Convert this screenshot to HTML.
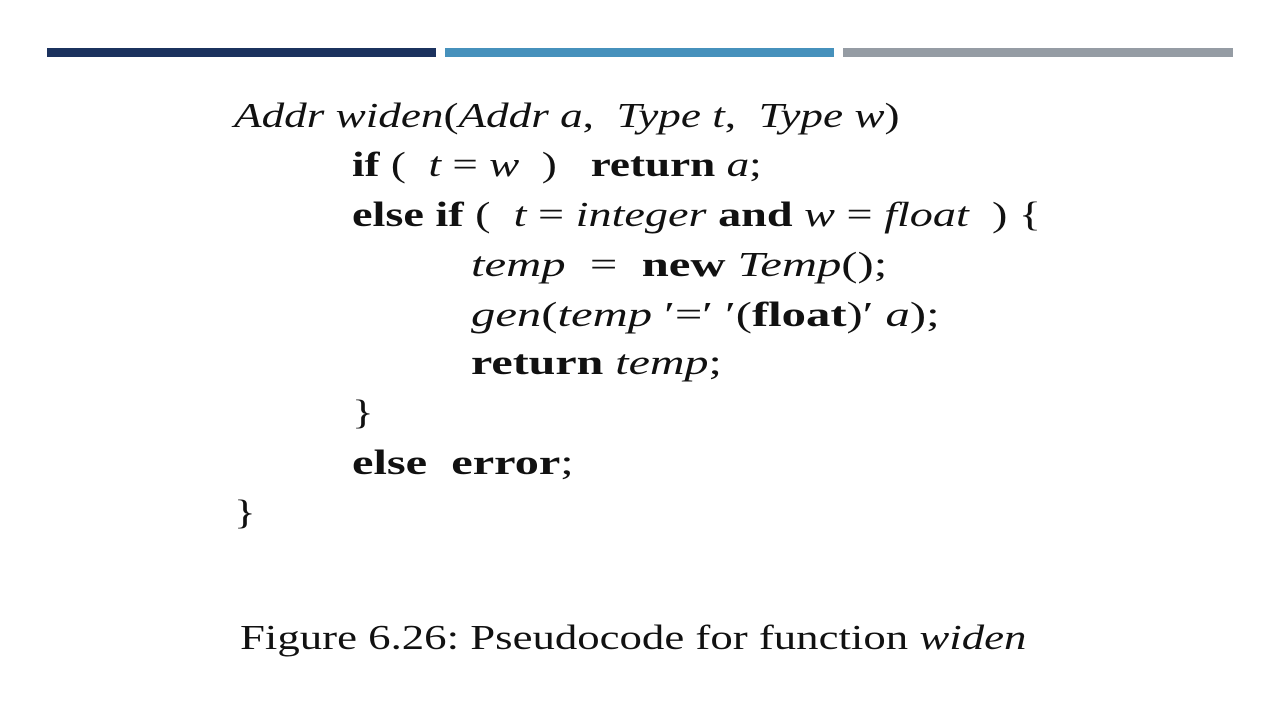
<!DOCTYPE html>
<html><head><style>
body{margin:0;width:1280px;height:720px;background:#fff;position:relative;overflow:hidden;font-family:"Liberation Serif",serif;color:#111}
.b{position:absolute;top:48px;height:9px}
.l{position:absolute;font-size:35px;white-space:pre;line-height:1;transform:scaleX(1.29);transform-origin:0 0}
i{font-style:italic}
</style></head><body>
<div class="b" style="left:47px;width:389px;background:#1b325e"></div>
<div class="b" style="left:445px;width:389px;background:#4691bc"></div>
<div class="b" style="left:843px;width:390px;background:#959ca4"></div>
<div class="l" style="left:234px;top:98px"><i>Addr widen</i>(<i>Addr a</i>,  <i>Type t</i>,  <i>Type w</i>)</div>
<div class="l" style="left:352px;top:147px"><b>if</b> (  <i>t</i> = <i>w</i>  )   <b>return</b> <i>a</i>;</div>
<div class="l" style="left:352px;top:197px;transform:scaleX(1.32)"><b>else if</b> (  <i>t</i> = <i>integer</i> <b>and</b> <i>w</i> = <i>float</i>  ) {</div>
<div class="l" style="left:471px;top:247px;transform:scaleX(1.39)"><i>temp</i>  =  <b>new</b> <i>Temp</i>();</div>
<div class="l" style="left:471px;top:297px;transform:scaleX(1.39)"><i>gen</i>(<i>temp</i> ′=′ ′(<b>float</b>)′ <i>a</i>);</div>
<div class="l" style="left:471px;top:345px;transform:scaleX(1.37)"><b>return</b> <i>temp</i>;</div>
<div class="l" style="left:352px;top:395px">}</div>
<div class="l" style="left:352px;top:445px;transform:scaleX(1.38)"><b>else</b>  <b>error</b>;</div>
<div class="l" style="left:234px;top:495px">}</div>
<div class="l" style="left:240px;top:620px;transform:scaleX(1.28)">Figure 6.26: Pseudocode for function <i>widen</i></div>
</body></html>
